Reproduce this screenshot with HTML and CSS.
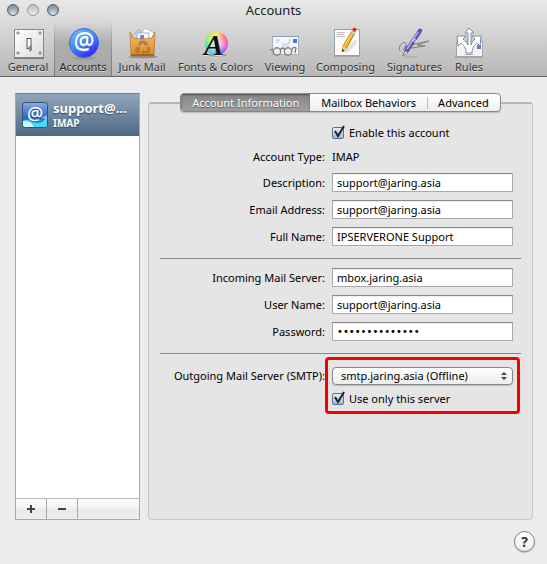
FILE: index.html
```html
<!DOCTYPE html>
<html lang="en">
<head>
<meta charset="utf-8">
<title>Accounts</title>
<link rel="stylesheet" href="styles.css">
</head>
<body>
<header class="titlebar">
  <div class="lights">
    <button class="light" aria-label="Close"></button>
    <button class="light pale" aria-label="Minimize"></button>
    <button class="light" aria-label="Zoom"></button>
  </div>
  <h1>Accounts</h1>
  <nav class="toolbar">
    <button class="tool">
      <svg viewBox="0 0 32 32"><defs><linearGradient id="plate" x2="1" y2="1"><stop stop-color="#fff"/><stop offset="1" stop-color="#dcdcdc"/></linearGradient></defs><path d="M2 30.500H32" stroke="#777"/><rect x="2.500" y="1.500" width="29" height="28" fill="url(#plate)" stroke="#888"/><g fill="#aaa" stroke="#777" stroke-width=".5"><circle cx="6" cy="5" r="1.300"/><circle cx="28" cy="5" r="1.300"/><circle cx="6" cy="25" r="1.300"/><circle cx="28" cy="25" r="1.300"/></g><path d="M14.500 10h5v11h-5z" fill="#555"/><path d="M15.500 11h3v6l-1 3h-2z" fill="#fff"/><path d="M16 19l4-2v5l-2 2z" fill="#888"/></svg>
      <span>General</span>
    </button>
    <button class="tool selected">
      <svg viewBox="0 0 32 32"><defs><linearGradient id="orb" x1=".2" x2=".8" y2="1"><stop stop-color="#72b9ff"/><stop offset=".5" stop-color="#3d86fa"/><stop offset="1" stop-color="#3514f5"/></linearGradient></defs><ellipse cx="17" cy="30" rx="12" ry="2" fill="#888" opacity=".5"/><circle cx="17" cy="15" r="14.500" fill="url(#orb)" stroke="#3567d8"/><text class="orb-at" x="17" y="21" text-anchor="middle">@</text></svg>
      <span>Accounts</span>
    </button>
    <button class="tool">
      <svg viewBox="0 0 32 32"><defs><linearGradient id="bag" y2="1" x2="0"><stop stop-color="#f2bd68"/><stop offset="1" stop-color="#d98c2c"/></linearGradient></defs><ellipse cx="17" cy="29" rx="15" ry="1.500" fill="#777" opacity=".6"/><path d="M15 6l4-6 9 5-4 9z" fill="#fff" stroke="#aaa" stroke-width=".7"/><path d="M6 8l7-7 5 10-9 3z" fill="#c7d5f7" stroke="#8ba0d0" stroke-width=".7"/><path d="M11 5h12v7H11z" fill="#f7faff" stroke="#8b9ec8" stroke-width=".8"/><path d="M14 7h4v4h-4z" fill="#6988d8"/><path d="M4 4l3 6q10 2 19 0l3-6-1 24H5z" fill="url(#bag)" stroke="#ae7226" stroke-width=".7"/><path d="M5 26h23v2H5z" fill="#a8641c"/><g opacity=".7"><g fill="none" stroke="#a06c2c" stroke-width="2.500"><path d="M13 17l2-3h3l2 3"/><path d="M22 19l1 3-1 2h-4"/><path d="M14 24h-3l-1-2 2-3"/></g><path d="M18 17h4l-1-4zM18 21v6l-3-3zM9 19h5v4z" fill="#a06c2c"/></g></svg>
      <span>Junk Mail</span>
    </button>
    <button class="tool">
      <svg viewBox="0 0 32 32"><ellipse cx="16" cy="27" rx="11" ry="1.500" fill="#777" opacity=".6"/><foreignObject x="5" y="4" width="23" height="23"><div xmlns="http://www.w3.org/1999/xhtml" class="wheel"></div></foreignObject><text class="font-a" x="4" y="27">A</text></svg>
      <span>Fonts &amp; Colors</span>
    </button>
    <button class="tool">
      <svg viewBox="0 0 32 32"><path d="M3.500 8.500h26v18h-26z" fill="#f4f7fb" stroke="#a8b0ba"/><path d="M3 8.500h27" stroke="#879eb7"/><path d="M24 11h4v4h-4z" fill="#4475e8"/><path d="M7 12h4m-4 2h3M19 12h3m-3 2h3M13 16h8m-8 2h7" stroke="#c3c8d0"/><g fill="#e8e8e8" fill-opacity=".8" stroke="#858585" stroke-width="1.400"><circle cx="8" cy="23.500" r="3.700"/><circle cx="19" cy="23.500" r="3.700"/></g><path d="M11 22q3-4 5 0M1 22l3-1M23 22q1-4 4-2l-1 5" fill="none" stroke="#777" stroke-width="1.300"/></svg>
      <span>Viewing</span>
    </button>
    <button class="tool">
      <svg viewBox="0 0 32 32"><path d="M4 28h26" stroke="#888"/><path d="M4.500 1.500h25v26h-25z" fill="#fcfcfc" stroke="#8da0ad"/><path d="M7 4.500h8M7 6.500h7M7 8.500h8" stroke="#bbb"/><path d="M12 24l14-13 1 4-10 10z" fill="#aaa" opacity=".3"/><path d="M12 24l1-6 8.500-14 3 2-8.500 15z" fill="#f2ad1a" stroke="#9b6210" stroke-width=".7"/><path d="M14.500 18L22.500 5" stroke="#ffdc63" stroke-width="1.300"/><path d="M12 24l1-6 3.500 3z" fill="#eed6b4"/><path d="M12 24l.5-3 2 1.500z" fill="#222"/><path d="M21 5l1.500-3 3 2-1.500 3z" fill="#ccd6dd" stroke="#788" stroke-width=".4"/><circle cx="24.500" cy="1.800" r="2" fill="#e4251b"/></svg>
      <span>Composing</span>
    </button>
    <button class="tool">
      <svg viewBox="0 0 32 32"><path d="M1 23c-3-5 5-12 6-7s-6 7-1 4l10-4 14-3-12 4 8 1-13 2q-5-3-8-1" fill="none" stroke="#777" stroke-width=".9"/><path d="M5 29h14" stroke="#888" opacity=".5"/><path d="M4 28l2-6L18 4q2-4 4-3t-1 5L9 24z" fill="#6856c5" stroke="#453a80" stroke-width=".7"/><path d="M8 21L19 4" stroke="#b6aaf2" stroke-width="1.400"/><path d="M14 10l4 3M13 12l4 2" stroke="#ddd"/><path d="M4 28l2-5 3 2z" fill="#eee" stroke="#777" stroke-width=".6"/></svg>
      <span>Signatures</span>
    </button>
    <button class="tool">
      <svg viewBox="0 0 32 32"><path d="M2 29h28" stroke="#888"/><path d="M3.500 13.500h26v15h-26z" fill="#f4f4f4" stroke="#a5a5a5"/><path d="M24 17h4v4h-4z" fill="#577be2"/><path d="M12 26.500h8" stroke="#aaa"/><path d="M13 25c0-6-3-8-5-10l-3 3-1-10h9l-3 3c2 2 4 3 5 6V5h-3l4-5 5 5h-3v12c1-3 2-4 4-6l-3-3h9l-1 10-3-3c-2 2-5 4-5 10z" fill="#fff" stroke="#7c8f9c" stroke-linejoin="round"/></svg>
      <span>Rules</span>
    </button>
  </nav>
</header>

<main class="content">
  <aside class="sidebar">
    <button class="account">
      <svg viewBox="0 0 26 26"><defs><linearGradient id="sky" x2="0" y2="1"><stop stop-color="#8aaaea"/><stop offset=".6" stop-color="#2768ce"/><stop offset="1" stop-color="#35cdf5"/></linearGradient></defs><rect x=".5" y=".5" width="25" height="25" rx="3" fill="url(#sky)" stroke="#345270"/><path d="M1 19q7-3 12 1t12-5v7q0 3-3 3H4q-3 0-3-3z" fill="#43dcf5"/><path d="M1 19q8-1 11 6H4q-3 0-3-3z" fill="#d5f8ff"/><path d="M19 16l6-3v4z" fill="#9bb3ee"/><text class="mail-at" x="13" y="18" text-anchor="middle">@</text></svg>
      <span class="account-text"><strong>support@…</strong><small>IMAP</small></span>
    </button>
    <div class="account-space"></div>
    <div class="actions">
      <button aria-label="Add account"><svg viewBox="0 0 8 8"><path d="M4 0v8M0 4h8"/></svg></button>
      <button aria-label="Remove account"><svg viewBox="0 0 8 8"><path d="M0 4h8"/></svg></button>
    </div>
  </aside>

  <section class="panel">
    <div class="tabs" role="tablist">
      <button role="tab" aria-selected="true" class="active">Account Information</button>
      <button role="tab" aria-selected="false">Mailbox Behaviors</button>
      <button role="tab" aria-selected="false">Advanced</button>
    </div>
    <form class="form">
      <div class="group">
        <label class="check first"><span class="box"><input type="checkbox" checked><svg viewBox="0 0 14 14"><path d="M3 6l3 5L12 1"/></svg></span>Enable this account</label>
        <span class="label">Account Type:</span><span>IMAP</span>
        <label class="label" for="description">Description:</label><input class="field" id="description" type="text" value="support@jaring.asia">
        <label class="label" for="email">Email Address:</label><input class="field" id="email" type="text" value="support@jaring.asia">
        <label class="label" for="name">Full Name:</label><input class="field" id="name" type="text" value="IPSERVERONE Support">
      </div>
      <hr>
      <div class="group">
        <label class="label" for="incoming">Incoming Mail Server:</label><input class="field" id="incoming" type="text" value="mbox.jaring.asia">
        <label class="label" for="user">User Name:</label><input class="field" id="user" type="text" value="support@jaring.asia">
        <label class="label" for="password">Password:</label><input class="field" id="password" type="password" value="12345678901234">
      </div>
      <hr>
      <div class="group outgoing">
        <label class="label" for="smtp">Outgoing Mail Server (SMTP):</label>
        <div class="highlight">
          <div class="popup">
            <select id="smtp"><option>smtp.jaring.asia (Offline)</option></select>
            <svg viewBox="0 0 6 8"><path d="M0 3l3-3 3 3zM0 5l3 3 3-3z"/></svg>
          </div>
          <label class="check"><span class="box"><input type="checkbox" checked><svg viewBox="0 0 14 14"><path d="M3 6l3 5L12 1"/></svg></span>Use only this server</label>
        </div>
      </div>
    </form>
  </section>
</main>
<footer><button class="help" aria-label="Help">?</button></footer>
</body>
</html>
```

FILE: styles.css
```css
* { box-sizing: border-box; }
html, body { height: 100%; }
body {
  margin: 0;
  display: flex;
  flex-direction: column;
  background: #ececec;
  color: #000;
  font: 11px/16px "Noto Sans", "Lucida Grande", sans-serif;
}
button, input, select { font: inherit; color: inherit; margin: 0; }
button { padding: 0; border: 0; background: none; }

.titlebar {
  position: relative;
  flex: none;
  background: linear-gradient(#e8e8e8, #b8b8b8);
  border-bottom: 1px solid #686868;
}
h1 {
  margin: 0;
  font-size: 13px;
  line-height: 20px;
  font-weight: 400;
  text-align: center;
  color: #222;
}
.lights { position: absolute; left: 7px; top: 4px; display: flex; gap: 8px; }
.light {
  width: 12px;
  height: 12px;
  border: 1px solid #526270;
  border-radius: 50%;
  background: radial-gradient(circle at 50% 85%, #dce8f0, #98a9b5 50%, #76889a);
}
.light.pale { border-color: #999; background: linear-gradient(#bcbcbc, #eee); }
.toolbar {
  display: grid;
  grid-template-columns: 52px 58px 60px 87px 52px 69px 69px 40px;
  padding: 1px 0 0 2px;
}
.tool {
  display: flex;
  flex-direction: column;
  align-items: center;
  padding: 7px 0 3px;
  line-height: 13px;
  color: #333;
  white-space: nowrap;
  text-shadow: 0 1px #ddd;
}
.tool svg { width: 32px; height: 32px; overflow: visible; }
.selected {
  background: linear-gradient(#0000, #00000026 40%, #00000018);
  border: solid;
  border-width: 0 1px;
  border-image: linear-gradient(#8880, #777) 1;
  color: #222;
}
.orb-at { font: 500 23px "Open Sans", sans-serif; fill: #fff; }
.font-a { font: italic bold 29px "Liberation Serif", serif; fill: #111; }
.wheel {
  height: 23px;
  border-radius: 50%;
  background: radial-gradient(#fff, #fff0 70%), conic-gradient(#ffe64f, #ff6470, #f348cb, #6562f1, #35cff1, #25ed9a, #a9f04a, #ffe64f);
}

.content { flex: 1; display: flex; gap: 8px; padding: 16px 14px 0 15px; }
.sidebar {
  flex: none;
  width: 125px;
  display: flex;
  flex-direction: column;
  border: 1px solid #aaa;
  border-top-color: #77818b;
  background: #fff;
}
.account {
  display: flex;
  gap: 5px;
  align-items: center;
  height: 42px;
  padding: 0 6px;
  background: linear-gradient(#90a5b9, #4d6984);
  color: #fff;
  text-align: left;
  text-shadow: 0 1px 1px #34485b;
}
.account svg { width: 26px; height: 26px; }
.mail-at { font: 600 18px "Open Sans", sans-serif; fill: #fff; }
.account-text { display: flex; flex-direction: column; }
.account-text strong { font-size: 13px; line-height: 16px; }
.account-text small { font-size: 10px; line-height: 14px; font-weight: 700; }
.account-space { flex: 1; }
.actions {
  display: flex;
  height: 21px;
  border-top: 1px solid #b8b8b8;
  background: linear-gradient(#fcfcfc, #f2f2f2 50%, #e8e8e8 51%, #eee);
}
.actions button { width: 31px; border-right: 1px solid #aaa; }
.actions svg { width: 8px; height: 8px; display: block; margin: auto; stroke: #444; stroke-width: 2; }

.panel {
  flex: 1;
  margin-top: 9px;
  border: 1px solid #c8c8c8;
  border-top: 2px solid #b5b5b5;
  border-radius: 4px;
  background: #e5e5e5;
}
.tabs {
  display: flex;
  width: max-content;
  height: 19px;
  margin: -11px auto 0;
  border: 1px solid #888;
  border-radius: 4px;
  overflow: hidden;
  background: linear-gradient(#fff, #eee);
  box-shadow: 0 1px 1px #bbb;
}
.tabs button { padding: 0 11px; line-height: 16px; }
.tabs button + button + button::before {
  content: "";
  float: left;
  height: 12px;
  margin: 2px 10px 0 -11px;
  border-left: 1px solid #bbb;
}
.tabs .active {
  background: linear-gradient(#858585, #a0a0a0);
  box-shadow: inset 0 1px 2px #555;
  color: #fff;
  text-shadow: 0 1px 1px #555;
}
.form { padding: 13px 11px 0; }
.group {
  display: grid;
  grid-template-columns: minmax(0, 165fr) minmax(0, 181fr);
  gap: 8px 7px;
  align-items: center;
  padding-right: 8px;
}
.label { text-align: right; white-space: nowrap; }
.first { grid-column: 2; }
.field {
  width: 100%;
  height: 19px;
  padding: 0 4px;
  border: 1px solid #aaa;
  border-top-color: #888;
  border-radius: 0;
  background: #fff;
  box-shadow: inset 0 1px 1px #eee;
  outline: 0;
}
#password { font: 10px "DejaVu Sans", sans-serif; }
hr { margin: 12px 0 9px; border: 0; border-top: 1px solid #888; }
.check { display: flex; align-items: center; gap: 5px; white-space: nowrap; }
.box { position: relative; width: 12px; height: 12px; }
.box input {
  appearance: none;
  display: block;
  width: 12px;
  height: 12px;
  border: 1px solid #60708a;
  border-radius: 2px;
  background: linear-gradient(#e8eef8, #a8b8d0);
}
.box svg {
  position: absolute;
  left: 0;
  top: -2px;
  width: 14px;
  height: 14px;
  fill: none;
  stroke: #1b2538;
  stroke-width: 2;
  pointer-events: none;
}
.outgoing { align-items: start; padding-top: 4px; }
.outgoing .label { line-height: 18px; }
.highlight { position: relative; display: grid; gap: 6px; }
.highlight::after {
  content: "";
  position: absolute;
  inset: -10px -7px -7px;
  border: 3px solid #f70000;
  border-radius: 4px;
  pointer-events: none;
}
.popup { position: relative; }
.popup select {
  appearance: none;
  display: block;
  width: 100%;
  height: 18px;
  padding: 0 20px 0 8px;
  border: 1px solid #888;
  border-radius: 4px;
  background: linear-gradient(#fff, #ececec);
  box-shadow: 0 1px 1px #bbb;
}
.popup svg { position: absolute; right: 6px; top: 5px; width: 6px; height: 8px; fill: #444; }

footer { flex: none; display: flex; justify-content: flex-end; padding: 11px 12px 12px; }
.help {
  width: 21px;
  height: 21px;
  border: 1px solid #808080;
  border-radius: 50%;
  background: linear-gradient(#fff, #eee);
  box-shadow: 0 1px 1px #bbb;
  font-size: 14px;
  font-weight: 700;
  line-height: 18px;
  color: #333;
}
```
